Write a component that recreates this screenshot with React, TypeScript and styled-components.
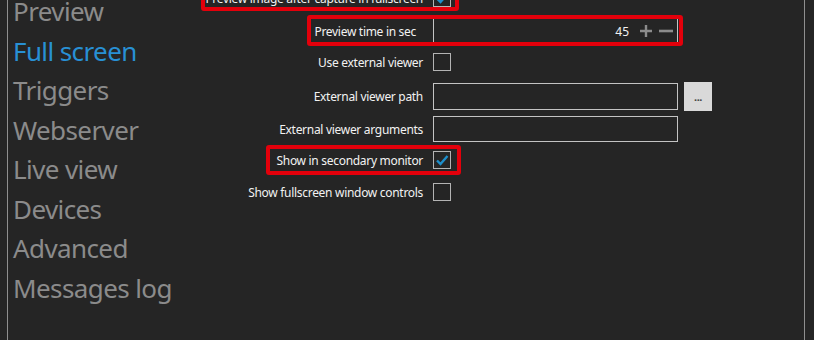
import React from "react";
import styled, { createGlobalStyle } from "styled-components";

const Global = createGlobalStyle`
  html, body { margin: 0; padding: 0; background: #252525; overflow: hidden; }
  body { font-family: "Noto Sans", "Open Sans", sans-serif; }
`;

const Frame = styled.div`
  position: relative;
  margin-left: 7px;
  width: 798px;
  height: 340px;
  border-left: 1px solid #8f8f8f;
  border-right: 1px solid #8f8f8f;
  box-sizing: border-box;
  display: flex;
  overflow: hidden;
`;

const Sidebar = styled.nav`
  width: 192px;
  flex: none;
  box-sizing: border-box;
  padding-left: 5px;
  margin-top: -8px;
  display: flex;
  flex-direction: column;
`;

const NavItem = styled.div<{ $active?: boolean }>`
  height: 39.5px;
  line-height: 39.5px;
  font-size: 26px;
  letter-spacing: -0.6px;
  color: ${(p) => (p.$active ? "#2890d4" : "#8b8b8b")};
  white-space: nowrap;
`;

const Form = styled.div`
  margin-top: -15px;
  display: flex;
  flex-direction: column;
`;

const Row = styled.div<{ $mt: number; $h?: number }>`
  position: relative;
  display: grid;
  grid-template-columns: 223px auto;
  column-gap: 10px;
  align-items: center;
  height: ${(p) => p.$h ?? 26}px;
  margin-top: ${(p) => p.$mt}px;
`;

const Label = styled.label<{ $pr?: number }>`
  justify-self: end;
  padding-right: ${(p) => p.$pr ?? 0}px;
  font-size: 12px;
  letter-spacing: -0.3px;
  color: #f2f2f2;
  white-space: nowrap;
`;

const Controls = styled.div`
  display: flex;
  align-items: center;
  gap: 6px;
`;

const Box = styled.span`
  width: 18px;
  height: 18px;
  box-sizing: border-box;
  border: 1px solid #b4b4b4;
  display: flex;
  align-items: center;
  justify-content: center;
`;

const TextInput = styled.div<{ $h?: number }>`
  width: 245px;
  height: ${(p) => p.$h ?? 26}px;
  box-sizing: border-box;
  border: 1px solid #c4c4c4;
  background: #252525;
  display: flex;
  align-items: center;
  justify-content: flex-end;
  padding-right: 4px;
  gap: 6px;
`;

const NumberValue = styled.span`
  font-size: 12px;
  color: #f2f2f2;
  margin-right: 4px;
`;

const BrowseButton = styled.button`
  width: 28px;
  height: 29px;
  border: none;
  background: #d9d9d9;
  color: #444;
  font-size: 11px;
  font-weight: bold;
  font-family: inherit;
  padding: 0 0 1px;
  display: flex;
  align-items: center;
  justify-content: center;
  letter-spacing: -0.5px;
`;

const Highlight = styled.span<{ $l: number; $t: number; $w: number; $h: number }>`
  position: absolute;
  left: ${(p) => p.$l}px;
  top: ${(p) => p.$t}px;
  width: ${(p) => p.$w}px;
  height: ${(p) => p.$h}px;
  box-sizing: border-box;
  border: 4px solid #e3000b;
  border-radius: 3px;
  pointer-events: none;
`;

const Check = () => (
  <svg width="14" height="12" viewBox="0 0 14 12">
    <path d="M2 6.5 L5.5 10 L12.5 2" fill="none" stroke="#1d8fcc" strokeWidth="2.4" />
  </svg>
);

const Plus = () => (
  <svg width="14" height="14" viewBox="0 0 14 14">
    <path d="M7 1 V13 M1 7 H13" stroke="#8c8c8c" strokeWidth="2.4" />
  </svg>
);

const Minus = () => (
  <svg width="14" height="14" viewBox="0 0 14 14">
    <path d="M0 7 H14" stroke="#8c8c8c" strokeWidth="2.6" />
  </svg>
);

const navItems = ["Preview", "Full screen", "Triggers", "Webserver", "Live view", "Devices", "Advanced", "Messages log"];

export default function App() {
  return (
    <>
      <Global />
      <Frame>
        <Sidebar>
          {navItems.map((n) => (
            <NavItem key={n} $active={n === "Full screen"}>
              {n}
            </NavItem>
          ))}
        </Sidebar>
        <Form>
          <Row $mt={0}>
            <Label>Preview image after capture in fullscreen</Label>
            <Controls>
              <Box>
                <Check />
              </Box>
            </Controls>
            <Highlight $l={1} $t={-10} $w={258} $h={36} />
          </Row>
          <Row $mt={7}>
            <Label $pr={7}>Preview time in sec</Label>
            <Controls>
              <TextInput>
                <NumberValue>45</NumberValue>
                <Plus />
                <Minus />
              </TextInput>
            </Controls>
            <Highlight $l={107} $t={-3} $w={376} $h={31} />
          </Row>
          <Row $mt={5}>
            <Label>Use external viewer</Label>
            <Controls>
              <Box />
            </Controls>
          </Row>
          <Row $mt={7} $h={27}>
            <Label>External viewer path</Label>
            <Controls>
              <TextInput $h={27} />
              <BrowseButton>...</BrowseButton>
            </Controls>
          </Row>
          <Row $mt={7}>
            <Label>External viewer arguments</Label>
            <Controls>
              <TextInput />
            </Controls>
          </Row>
          <Row $mt={5}>
            <Label>Show in secondary monitor</Label>
            <Controls>
              <Box>
                <Check />
              </Box>
            </Controls>
            <Highlight $l={66} $t={-2} $w={195} $h={30} />
          </Row>
          <Row $mt={6}>
            <Label>Show fullscreen window controls</Label>
            <Controls>
              <Box />
            </Controls>
          </Row>
        </Form>
      </Frame>
    </>
  );
}
